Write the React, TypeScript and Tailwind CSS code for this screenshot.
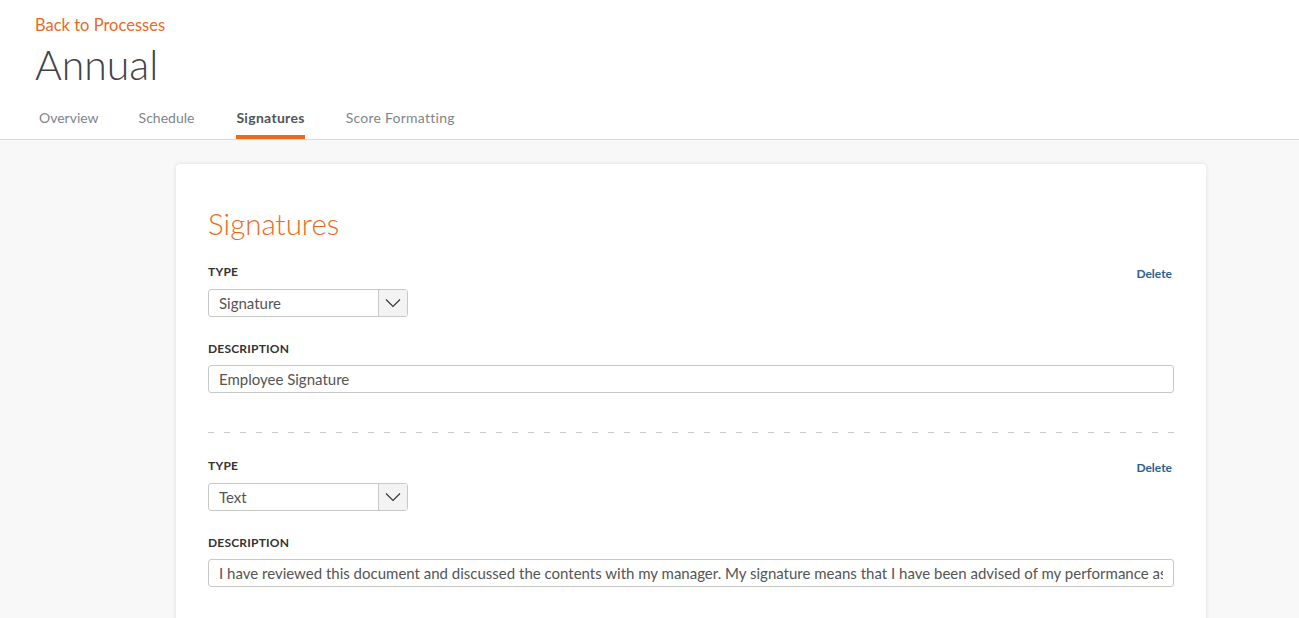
import React from "react";

const font = { fontFamily: "Lato, 'Noto Sans', sans-serif" };

function Chevron() {
  return (
    <svg width="16" height="10" viewBox="0 0 16 10" fill="none">
      <path d="M1 1.5 L8 8.5 L15 1.5" stroke="#333" strokeWidth="1.1" />
    </svg>
  );
}

function Select({ value }: { value: string }) {
  return (
    <div className="flex h-[28px] w-[200px] rounded-[3px] border border-[#c8c8c8] bg-white">
      <div className="flex flex-1 items-center pl-[10px] text-[15px] text-[#555]">{value}</div>
      <div className="flex w-[29px] items-center justify-center border-l border-[#c8c8c8] bg-[#f3f3f3]">
        <Chevron />
      </div>
    </div>
  );
}

function Block({ type, desc }: { type: string; desc: string }) {
  return (
    <div>
      <div className="flex items-start justify-between">
        <div className="text-[12px] font-bold leading-[16px] tracking-[0.2px] text-[#333]">TYPE</div>
        <div className="mr-[2px] mt-[2px] text-[12px] font-bold leading-[16px] text-[#2e5f8c]">Delete</div>
      </div>
      <div className="mt-[7px]">
        <Select value={type} />
      </div>
      <div className="mt-[24px] text-[12px] font-bold leading-[16px] tracking-[0.2px] text-[#333]">DESCRIPTION</div>
      <div className="mt-[8px] flex h-[28px] items-center overflow-hidden whitespace-nowrap rounded-[3px] border border-[#c8c8c8] bg-white pl-[10px] pr-[10px] text-[15px] text-[#555]">
        <span className="overflow-hidden">{desc}</span>
      </div>
    </div>
  );
}

export default function App() {
  return (
    <div className="min-h-[618px] bg-[#f8f8f8]" style={font}>
      <div className="bg-white">
        <div className="px-[35px] pt-[14px]">
          <div className="text-[16.5px] leading-[22px] text-[#ec6a1c]">Back to Processes</div>
          <div className="mt-[5px] text-[41px] font-light leading-[48px] text-[#3f444a]">Annual</div>
        </div>
        <div className="mt-[18px] flex border-b border-[#d9d9d9] pl-[39px] text-[14px]">
          <div className="mr-[40px] pb-[11px] text-[#80858a]">Overview</div>
          <div className="mr-[42px] pb-[11px] text-[#80858a]">Schedule</div>
          <div className="mr-[41px] border-b-4 border-[#ec6a1c] pb-[7px] font-bold tracking-[0.3px] text-[#50555b]">Signatures</div>
          <div className="pb-[11px] tracking-[0.25px] text-[#80858a]">Score Formatting</div>
        </div>
      </div>
      <div className="pl-[176px] pt-[24px]">
        <div className="w-[1030px] rounded-t-[4px] bg-white px-[32px] pt-[42px] pb-[80px] shadow-[0_0_4px_rgba(0,0,0,0.12)]">
          <div className="text-[29.5px] font-light leading-[36px] text-[#ec6a1c]">Signatures</div>
          <div className="mt-[22px]">
            <Block type="Signature" desc="Employee Signature" />
          </div>
          <div className="mt-[39px] h-px bg-[repeating-linear-gradient(to_right,#c9c9c9_0px,#c9c9c9_6px,transparent_6px,transparent_16px)]" />
          <div className="mt-[25px]">
            <Block
              type="Text"
              desc="I have reviewed this document and discussed the contents with my manager. My signature means that I have been advised of my performance assessment and does not necessarily imply that I agree with it."
            />
          </div>
        </div>
      </div>
    </div>
  );
}
